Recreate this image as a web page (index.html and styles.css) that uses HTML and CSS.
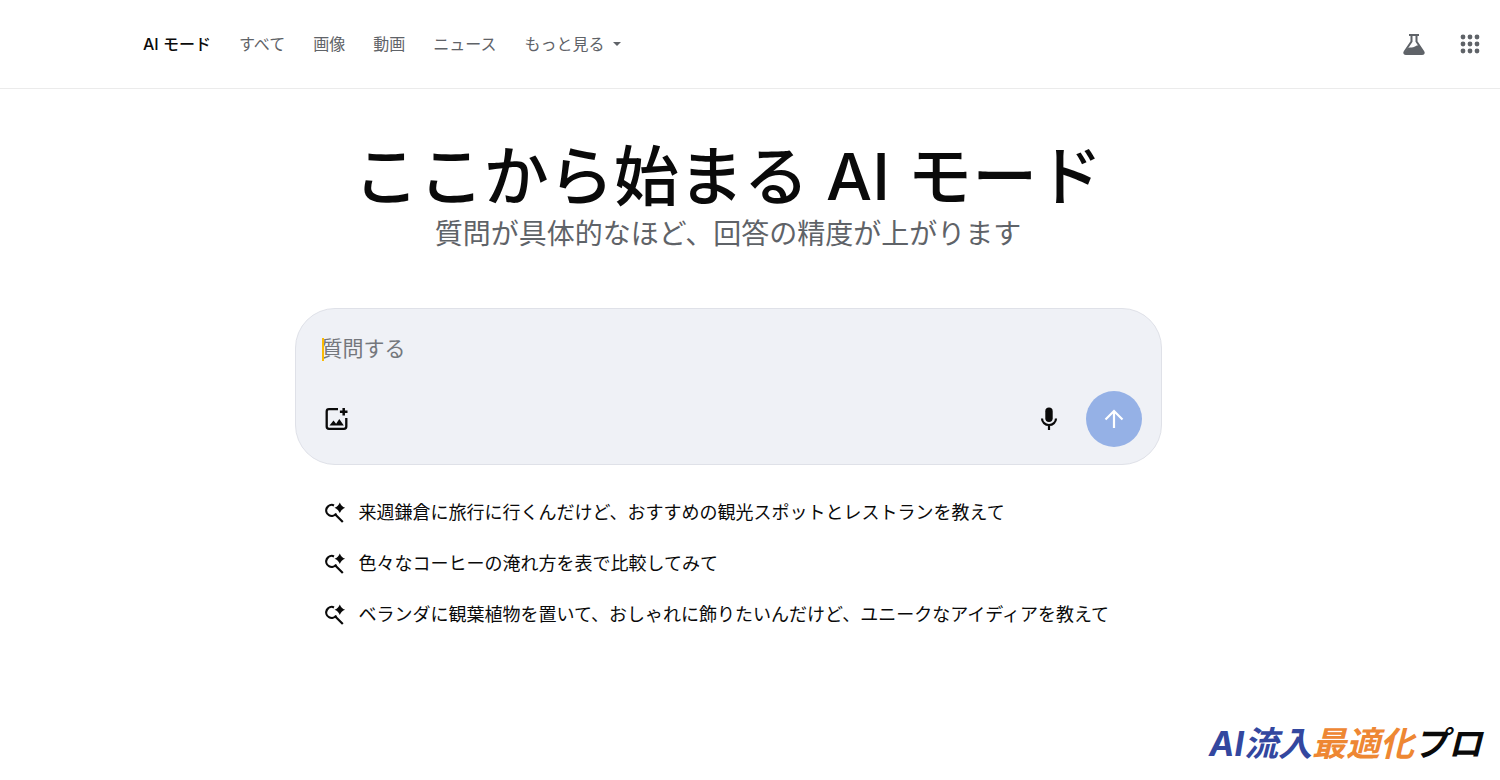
FILE: index.html
```html
<!DOCTYPE html>
<html lang="ja">
  <head>
    <meta charset="UTF-8" />
    <meta name="viewport" content="width=device-width, initial-scale=1.0" />
    <title>AI モード</title>
    <link rel="stylesheet" href="styles.css">
  </head>

  <body>
    <header class="header">
      <nav class="nav">
        <a class="active" href="#">AI モード</a>
        <a href="#">すべて</a>
        <a href="#">画像</a>
        <a href="#">動画</a>
        <a href="#">ニュース</a>
        <button type="button" class="more">もっと見る<span class="arrow"></span></button>
      </nav>
      <div class="tools">
        <button type="button" aria-label="Labs">
          <svg width="24" height="24" viewBox="0 0 24 24">
            <path d="M7 3h10M9.500 3v6.500L2.600 19.800c-.8 1.300 0 2.200 1.400 2.200h16c1.400 0 2.200-.9 1.400-2.200L14.500 9.500V3" fill="none" stroke="#5f6368" stroke-width="2" />
            <path d="M4 18.500l2-2.500c2.500-1 4.500 0 7-1.500 1.500-1 2.800-1.500 4.300-1.300L21.500 20v2h-19v-1.500z" fill="#5f6368" />
          </svg>
        </button>
        <button type="button" aria-label="アプリ">
          <svg width="24" height="24" viewBox="0 0 24 24" fill="#5f6368">
            <circle cx="5" cy="5" r="2.400" /><circle cx="12" cy="5" r="2.400" /><circle cx="19" cy="5" r="2.400" />
            <circle cx="5" cy="12" r="2.400" /><circle cx="12" cy="12" r="2.400" /><circle cx="19" cy="12" r="2.400" />
            <circle cx="5" cy="19" r="2.400" /><circle cx="12" cy="19" r="2.400" /><circle cx="19" cy="19" r="2.400" />
          </svg>
        </button>
      </div>
    </header>

    <main class="main">
      <h1>ここから始まる AI モード</h1>
      <p class="lead">質問が具体的なほど、回答の精度が上がります</p>

      <form class="ask">
        <div class="field">
          <span class="caret"></span>
          <input type="text" placeholder="質問する" aria-label="質問する" />
        </div>
        <div class="actions">
          <button type="button" aria-label="画像を追加">
            <svg width="28" height="28" viewBox="0 0 28 28">
              <path d="M16 4.200H7Q4.700 4.200 4.700 6.500v15q0 2.300 2.300 2.300h15q2.300 0 2.300-2.300V13" fill="none" stroke="#0a0a0a" stroke-width="2.300" />
              <path d="M21.700 3v7.600M17.900 6.800h7.600" fill="none" stroke="#0a0a0a" stroke-width="2.500" />
              <path d="M7.500 20.500l4-5 2.600 3.200 3.200-4.700 4.500 6.500z" fill="#0a0a0a" />
            </svg>
          </button>
          <button type="button" class="mic" aria-label="音声入力">
            <svg width="28" height="28" viewBox="0 0 28 28">
              <rect x="10.300" y="2.500" width="7.400" height="14.500" rx="3.700" fill="#0a0a0a" />
              <path d="M7 13.500a7 6.500 0 0 0 14 0M14 20v5" fill="none" stroke="#0a0a0a" stroke-width="2.200" />
            </svg>
          </button>
          <button type="submit" class="send" aria-label="送信">
            <svg width="28" height="28" viewBox="0 0 28 28">
              <path d="M14 23V6M5.500 14.500L14 6l8.500 8.500" fill="none" stroke="#fff" stroke-width="2.200" />
            </svg>
          </button>
        </div>
      </form>

      <ul class="list">
        <li>
          <a href="#">
            <svg width="22" height="22" viewBox="0 0 22 22"><use href="#spark" /></svg>
            来週鎌倉に旅行に行くんだけど、おすすめの観光スポットとレストランを教えて
          </a>
        </li>
        <li>
          <a href="#">
            <svg width="22" height="22" viewBox="0 0 22 22"><use href="#spark" /></svg>
            色々なコーヒーの淹れ方を表で比較してみて
          </a>
        </li>
        <li>
          <a href="#">
            <svg width="22" height="22" viewBox="0 0 22 22"><use href="#spark" /></svg>
            ベランダに観葉植物を置いて、おしゃれに飾りたいんだけど、ユニークなアイディアを教えて
          </a>
        </li>
      </ul>
    </main>

    <footer class="footer">
      <span class="blue">AI流入</span><span class="orange">最適化</span><span>プロ</span>
    </footer>

    <!-- 検索アイコン -->
    <svg width="0" height="0" class="defs">
      <symbol id="spark" viewBox="0 0 22 22">
        <path d="M10 3.400A5.500 5.500 0 1 0 12.300 11.500M10.800 12L18.800 20" fill="none" stroke="#0a0a0a" stroke-width="2.200" />
        <path d="M15.800 .5q1.400 3.900 5.300 5.300-3.900 1.400-5.300 5.300-1.400-3.900-5.300-5.300 3.900-1.400 5.300-5.300z" fill="#0a0a0a" />
      </symbol>
    </svg>
  </body>
</html>
```

FILE: styles.css
```css
* {
  margin: 0;
  padding: 0;
  box-sizing: border-box;
}

body {
  display: flex;
  flex-direction: column;
  min-height: 100vh;
  background: #fff;
  color: #0a0a0a;
  font-family: Inter, "Noto Sans CJK JP", sans-serif;
}

li {
  list-style: none;
}

a {
  color: inherit;
  text-decoration: none;
}

button {
  border: none;
  background: none;
  color: inherit;
  font: inherit;
  cursor: pointer;
}

svg {
  display: block;
  flex-shrink: 0;
}

.defs {
  position: absolute;
}

.header {
  display: flex;
  align-items: center;
  justify-content: space-between;
  height: 89px;
  padding: 0 18px 0 143px;
  border-bottom: 1px solid #ebebeb;
}

.nav {
  display: flex;
  align-items: center;
  gap: 28px;
  color: #5f6368;
  font-size: 16px;
  line-height: 22px;
}

.nav .active {
  color: #0a0a0a;
  font-weight: 500;
}

.more {
  display: flex;
  align-items: center;
  gap: 9px;
}

.arrow {
  border: 4px solid transparent;
  border-top-color: #5f6368;
  border-bottom: none;
}

.tools {
  display: flex;
  gap: 32px;
}

.main {
  display: flex;
  flex-direction: column;
  align-items: center;
  padding: 48px 44px 0 0;
}

h1 {
  font-size: 65px;
  font-weight: 500;
  line-height: 80px;
}

.lead {
  color: #5f6368;
  font-size: 28px;
  line-height: 34px;
}

.ask {
  width: 100%;
  max-width: 867px;
  margin-top: 57px;
  padding: 23px 19px 17px 26px;
  border: 1px solid #dfe1e8;
  border-radius: 40px;
  background: #eff1f6;
}

.field {
  position: relative;
}

.field input {
  display: block;
  width: 100%;
  height: 32px;
  border: none;
  outline: none;
  background: none;
  font-family: inherit;
  font-size: 21px;
}

.field input::placeholder {
  color: #74777c;
}

.caret {
  position: absolute;
  top: 6px;
  left: 0;
  width: 2px;
  height: 23px;
  background: #fbbc04;
}

.actions {
  display: flex;
  align-items: center;
  margin-top: 27px;
}

.mic {
  margin-left: auto;
}

.send {
  display: flex;
  align-items: center;
  justify-content: center;
  width: 56px;
  height: 56px;
  margin-left: 23px;
  border-radius: 50%;
  background: #95b1e6;
}

.list {
  width: 100%;
  max-width: 867px;
  margin-top: 34px;
  padding-left: 29px;
}

.list li {
  margin-bottom: 24px;
}

.list a {
  display: flex;
  align-items: center;
  gap: 13px;
  font-size: 18px;
  line-height: 27px;
}

.footer {
  margin-top: auto;
  padding: 0 18px 12px;
  font-size: 34px;
  font-style: italic;
  font-weight: 700;
  line-height: 48px;
  text-align: right;
}

.blue {
  color: #33479f;
}

.orange {
  color: #ee8733;
}
```
